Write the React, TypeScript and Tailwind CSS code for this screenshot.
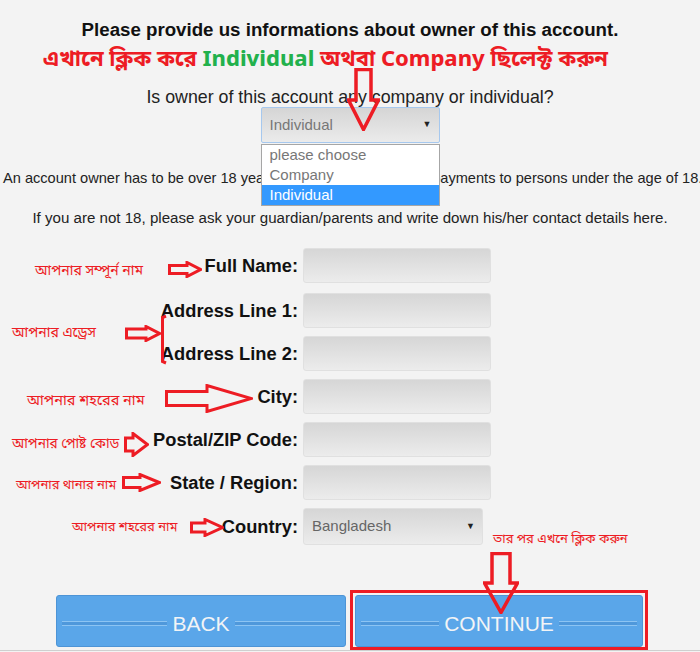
import React from 'react';

const SANS = "font-['Liberation_Sans',Arial,sans-serif]";
const BN = "font-['Noto_Sans_Bengali','Lohit_Bengali','Noto_Sans',sans-serif]";

interface ArrowProps {
  className: string;
  w: number;
  h: number;
  shaft: number;
  headAt: number;
}

// hollow red block arrow pointing right
function RightArrow({ className, w, h, shaft, headAt }: ArrowProps) {
  const t = (h - shaft) / 2;
  const b = h - t;
  const pts = [
    [1.5, t],
    [headAt, t],
    [headAt, 1.5],
    [w - 1.5, h / 2],
    [headAt, h - 1.5],
    [headAt, b],
    [1.5, b]
  ]
    .map((p) => p.join(','))
    .join(' ');
  return (
    <svg className={className} width={w} height={h} viewBox={`0 0 ${w} ${h}`}>
      <polygon points={pts} fill="none" stroke="#ed1c24" strokeWidth={3} strokeLinejoin="miter" />
    </svg>
  );
}

function DownArrow({ className, w, h, shaft, headAt }: ArrowProps) {
  const l = (w - shaft) / 2;
  const r = w - l;
  const pts = [
    [l, 1.5],
    [r, 1.5],
    [r, headAt],
    [w - 1.5, headAt],
    [w / 2, h - 1.5],
    [1.5, headAt],
    [l, headAt]
  ]
    .map((p) => p.join(','))
    .join(' ');
  return (
    <svg className={className} width={w} height={h} viewBox={`0 0 ${w} ${h}`}>
      <polygon points={pts} fill="none" stroke="#ed1c24" strokeWidth={3.5} strokeLinejoin="miter" />
    </svg>
  );
}

const FIELDS = ['Full Name:', 'Address Line 1:', 'Address Line 2:', 'City:', 'Postal/ZIP Code:', 'State / Region:'];

function Caret() {
  return <span className="text-[9px] text-[#222]">▼</span>;
}

function BlueButton({ label }: { label: string }) {
  return (
    <button className="flex h-[52px] w-full items-center gap-[5px] rounded-[3px] border border-[#4d94d6] bg-[#5aa6e9] px-[5px] pt-[5px]">
      <span className="h-[5px] flex-1 border-y border-[#8cc4f3] bg-[#4f98db]" />
      <span className={`${SANS} text-[21px] leading-none text-[#f2f4f6]`}>{label}</span>
      <span className="h-[5px] flex-1 border-y border-[#8cc4f3] bg-[#4f98db]" />
    </button>
  );
}

export default function App() {
  return (
    <div className={`relative h-[652px] w-[700px] overflow-hidden bg-[#f3f3f3] ${SANS}`}>
      <div className="flex flex-col items-center pt-[20px]">
        <h1 className="text-[18.7px] font-bold leading-[20px] text-[#111]">
          Please provide us informations about owner of this account.
        </h1>
        <p className={`${BN} mr-[49px] mt-[7px] text-[22px] font-bold leading-[28px] text-[#ed1c24]`}>
          এখানে ক্লিক করে <span className="text-[#22b14c]">Individual</span> অথবা Company ছিলেক্ট করুন
        </p>
        <p className="mt-[13px] text-[17.8px] leading-[19px] text-[#222]">
          Is owner of this account any company or individual?
        </p>
        <div className="relative">
          <div className="flex h-[36px] w-[179px] items-center justify-between rounded-[2px] border border-[#a6c8ee] bg-gradient-to-b from-[#d5d5d5] to-[#ebebeb] pl-[8px] pr-[7px]">
            <span className="text-[15px] text-[#777]">Individual</span>
            <Caret />
          </div>
          <ul className="absolute left-0 top-[37px] z-10 w-[179px] border border-[#a6a6a6] bg-white text-[15px] leading-[20px] text-[#777]">
            <li className="pl-[8px]">please choose</li>
            <li className="pl-[8px]">Company</li>
            <li className="bg-[#3399ff] pl-[8px] text-white">Individual</li>
          </ul>
        </div>
      </div>

      <p className="mt-[27px] overflow-hidden whitespace-nowrap pl-[3px] text-[14.6px] leading-[17px] text-[#222]">
        An account owner has to be over 18 years of age, we do not send payments to persons under the age of 18.
      </p>
      <p className="mt-[22px] text-center text-[15.1px] leading-[18px] text-[#222]">
        If you are not 18, please ask your guardian/parents and write down his/her contact details here.
      </p>

      <div className="mt-[21px] flex flex-col gap-[8px]">
        {FIELDS.map((label, i) => (
          <div key={label} className={`flex items-center ${i === 0 ? 'mb-[2px]' : ''}`}>
            <label className="w-[298px] text-right text-[18.3px] font-bold text-[#111]">{label}</label>
            <div className="ml-[5px] h-[35px] w-[188px] rounded-[3px] border border-[#e0e0e0] bg-gradient-to-b from-[#d6d6d6] to-[#ececec]" />
          </div>
        ))}
        <div className="flex items-center">
          <label className="w-[298px] text-right text-[18.3px] font-bold text-[#111]">Country:</label>
          <div className="ml-[5px] flex h-[37px] w-[180px] items-center justify-between rounded-[3px] border border-[#e0e0e0] bg-gradient-to-b from-[#d6d6d6] to-[#ececec] pl-[8px] pr-[7px]">
            <span className="text-[15px] text-[#666]">Bangladesh</span>
            <Caret />
          </div>
        </div>
      </div>

      <div className="mt-[45px] flex items-start pl-[56px]">
        <div className="mt-[5px] w-[290px]">
          <BlueButton label="BACK" />
        </div>
        <div className="ml-[4px] w-[298px] border-[3px] border-[#ed1c24] px-[2px] pt-[2px] pb-0">
          <BlueButton label="CONTINUE" />
        </div>
      </div>
      <div className="absolute bottom-[1px] left-0 h-px w-full bg-[#cfcfcf]" />

      {/* annotations */}
      <DownArrow className="absolute left-[347px] top-[68px] z-20" w={33} h={63} shaft={15} headAt={32} />
      <DownArrow className="absolute left-[483px] top-[552px] z-20" w={36} h={62} shaft={18} headAt={31} />

      <span className={`${BN} absolute left-[35px] top-[261px] text-[14px] text-[#ed1c24]`}>আপনার সম্পূর্ন নাম</span>
      <RightArrow className="absolute left-[168px] top-[261px]" w={34} h={17} shaft={8} headAt={19} />

      <span className={`${BN} absolute left-[12px] top-[323px] text-[14px] text-[#ed1c24]`}>আপনার এড্রেস</span>
      <RightArrow className="absolute left-[125px] top-[325px]" w={36} h={17} shaft={9} headAt={21} />
      <svg className="absolute left-[159px] top-[314px]" width={8} height={51} viewBox="0 0 8 51">
        <path d="M7 2 L3.5 3.5 L3.5 47.5 L7 49" fill="none" stroke="#ed1c24" strokeWidth={3} />
      </svg>

      <span className={`${BN} absolute left-[27px] top-[391px] text-[14.5px] text-[#ed1c24]`}>আপনার শহরের নাম</span>
      <RightArrow className="absolute left-[165px] top-[384px]" w={88} h={29} shaft={14} headAt={42} />

      <span className={`${BN} absolute left-[12px] top-[435px] text-[13.7px] text-[#ed1c24]`}>আপনার পোষ্ট কোড</span>
      <RightArrow className="absolute left-[124px] top-[432px]" w={25} h={25} shaft={13} headAt={9} />

      <span className={`${BN} absolute left-[16px] top-[476px] text-[13px] text-[#ed1c24]`}>আপনার থানার নাম</span>
      <RightArrow className="absolute left-[122px] top-[473px]" w={39} h={19} shaft={10} headAt={18} />

      <span className={`${BN} absolute left-[72px] top-[518px] text-[13px] text-[#ed1c24]`}>আপনার শহরের নাম</span>
      <RightArrow className="absolute left-[190px] top-[518px]" w={34} h={19} shaft={9} headAt={15} />

      <span className={`${BN} absolute left-[493px] top-[530px] text-[13px] text-[#ed1c24]`}>তার পর এখনে ক্লিক করুন</span>
    </div>
  );
}
